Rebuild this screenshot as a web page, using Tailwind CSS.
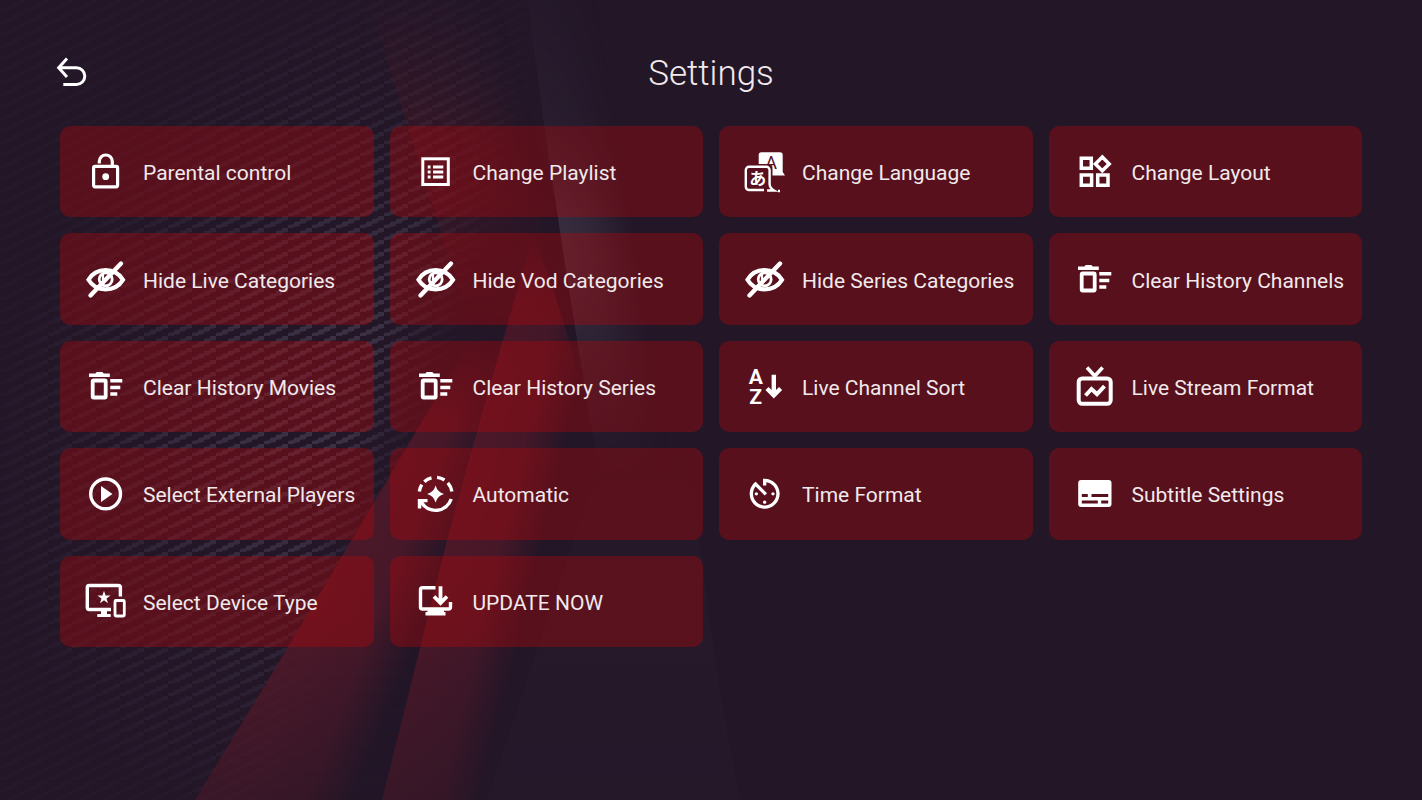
<!DOCTYPE html>
<html lang="en">

<head>
    <meta charset="UTF-8" />
    <meta name="viewport" content="width=device-width, initial-scale=1.0" />
    <title>Settings</title>
    <script src="https://cdn.jsdelivr.net/npm/@tailwindcss/browser@4"></script>
</head>

<body class="relative min-h-screen overflow-x-hidden bg-[#221627] font-[Roboto,sans-serif] text-[#f1e9eb]">
    <!-- Background -->
    <svg class="absolute inset-0 h-full w-full" viewBox="0 0 1422 800" preserveAspectRatio="none" aria-hidden="true">
        <defs>
            <pattern id="carbon" width="24" height="12" patternUnits="userSpaceOnUse">
                <g fill="#8d89a6">
                    <path d="M0 9l6-1v4H0z" />
                    <path d="M6 6l6-1v5l-6 1z" />
                    <path d="M12 3l6-1v5l-6 1z" />
                    <path d="M18 0h6v4l-6 1z" />
                </g>
            </pattern>
            <radialGradient id="glow" gradientUnits="userSpaceOnUse" cx="0" cy="0" r="1"
                gradientTransform="translate(330 400) rotate(-66) scale(430 320)">
                <stop offset="0" stop-color="#fff" stop-opacity=".26" />
                <stop offset=".4" stop-color="#fff" stop-opacity=".19" />
                <stop offset=".75" stop-color="#fff" stop-opacity=".08" />
                <stop offset="1" stop-color="#fff" stop-opacity=".03" />
            </radialGradient>
            <linearGradient id="edge" gradientUnits="userSpaceOnUse" x1="390" y1="300" x2="465" y2="325">
                <stop offset="0" stop-color="#fff" />
                <stop offset="1" stop-color="#000" />
            </linearGradient>
            <mask id="fadeGlow" maskUnits="userSpaceOnUse" x="0" y="0" width="1422" height="800">
                <rect width="600" height="800" fill="url(#glow)" />
            </mask>
            <mask id="fadeEdge" maskUnits="userSpaceOnUse" x="0" y="0" width="1422" height="800">
                <rect width="1422" height="800" fill="url(#edge)" />
            </mask>
            <linearGradient id="shardA" gradientUnits="userSpaceOnUse" x1="420" y1="140" x2="530" y2="110">
                <stop offset="0" stop-color="#5a1826" stop-opacity=".34" />
                <stop offset=".5" stop-color="#5a1826" stop-opacity=".26" />
                <stop offset="1" stop-color="#5a1826" stop-opacity="0" />
            </linearGradient>
            <linearGradient id="shardB" gradientUnits="userSpaceOnUse" x1="562" y1="240" x2="635" y2="228">
                <stop offset="0" stop-color="#5a5367" stop-opacity=".38" />
                <stop offset=".4" stop-color="#5a5367" stop-opacity=".28" />
                <stop offset="1" stop-color="#5a5367" stop-opacity="0" />
            </linearGradient>
            <linearGradient id="shardC" gradientUnits="userSpaceOnUse" x1="447" y1="540" x2="540" y2="562">
                <stop offset="0" stop-color="#6a1a2a" stop-opacity=".6" />
                <stop offset=".55" stop-color="#6a1a2a" stop-opacity=".5" />
                <stop offset="1" stop-color="#6a1a2a" stop-opacity="0" />
            </linearGradient>
            <linearGradient id="shardD" gradientUnits="userSpaceOnUse" x1="340" y1="553" x2="436" y2="590">
                <stop offset="0" stop-color="#6a1a2a" stop-opacity=".6" />
                <stop offset=".55" stop-color="#6a1a2a" stop-opacity=".5" />
                <stop offset="1" stop-color="#6a1a2a" stop-opacity="0" />
            </linearGradient>
            <linearGradient id="shardE" gradientUnits="userSpaceOnUse" x1="0" y1="420" x2="0" y2="800">
                <stop offset="0" stop-color="#2b1d2f" stop-opacity="0" />
                <stop offset=".4" stop-color="#2b1d2f" stop-opacity=".4" />
                <stop offset="1" stop-color="#2b1d2f" stop-opacity=".3" />
            </linearGradient>
            <linearGradient id="fadeTopA" x1="0" y1="0" x2="0" y2="1">
                <stop offset="0" stop-color="#222" />
                <stop offset=".4" stop-color="#fff" />
                <stop offset=".55" stop-color="#fff" />
                <stop offset="1" stop-color="#000" />
            </linearGradient>
            <linearGradient id="fadeTopB" x1="0" y1="0" x2="0" y2="1">
                <stop offset="0" stop-color="#222" />
                <stop offset=".25" stop-color="#555" />
                <stop offset=".45" stop-color="#fff" />
                <stop offset=".55" stop-color="#fff" />
                <stop offset="1" stop-color="#000" />
            </linearGradient>
            <mask id="fadeA" maskUnits="userSpaceOnUse" x="340" y="0" width="300" height="350">
                <rect x="340" width="300" height="350" fill="url(#fadeTopA)" />
            </mask>
            <mask id="fadeB" maskUnits="userSpaceOnUse" x="400" y="0" width="400" height="480">
                <rect x="400" width="400" height="480" fill="url(#fadeTopB)" />
            </mask>
            <linearGradient id="fadeInC" gradientUnits="userSpaceOnUse" x1="0" y1="230" x2="0" y2="800">
                <stop offset="0" stop-color="#000" />
                <stop offset=".12" stop-color="#ccc" />
                <stop offset=".25" stop-color="#fff" />
                <stop offset=".6" stop-color="#fff" />
                <stop offset="1" stop-color="#888" />
            </linearGradient>
            <linearGradient id="fadeInD" gradientUnits="userSpaceOnUse" x1="0" y1="340" x2="0" y2="800">
                <stop offset="0" stop-color="#000" />
                <stop offset=".18" stop-color="#fff" />
                <stop offset=".6" stop-color="#fff" />
                <stop offset="1" stop-color="#888" />
            </linearGradient>
            <mask id="fadeC" maskUnits="userSpaceOnUse" x="150" y="230" width="500" height="570">
                <rect x="150" y="230" width="500" height="570" fill="url(#fadeInC)" />
            </mask>
            <mask id="fadeD" maskUnits="userSpaceOnUse" x="150" y="230" width="500" height="570">
                <rect x="150" y="230" width="500" height="570" fill="url(#fadeInD)" />
            </mask>
        </defs>
        <g mask="url(#fadeEdge)">
            <rect width="600" height="800" fill="url(#carbon)" mask="url(#fadeGlow)" />
        </g>
        <path d="M368 0Q412 140 478 350H640V0z" fill="url(#shardA)" mask="url(#fadeA)" />
        <path d="M528 0Q545 150 600 480H800V0z" fill="url(#shardB)" mask="url(#fadeB)" />
        <path d="M614 420L487 800H740Q700 600 690 420z" fill="url(#shardE)" />
        <g mask="url(#fadeD)">
            <path d="M470 340Q395 467 288 647L195 800H382L447 540L505 340z" fill="#221627" />
            <path d="M470 340Q395 467 288 647L195 800H382L447 540L505 340z" fill="url(#shardD)" />
        </g>
        <path d="M533 235Q480 420 447 540L382 800H600V450Q560 300 533 235z" fill="url(#shardC)" mask="url(#fadeC)" />
    </svg>

    <!-- Shared icons -->
    <svg class="hidden" aria-hidden="true">
        <mask id="slashGap" maskUnits="userSpaceOnUse" x="0" y="0" width="48" height="48">
            <rect width="48" height="48" fill="#fff" />
            <path d="M43.500 10L12.500 43" stroke="#000" stroke-width="2.500" />
        </mask>
        <symbol id="eye-off" viewBox="0 0 48 48">
            <g fill="none" stroke="#fff" mask="url(#slashGap)">
                <path d="M7.500 24.800C15 12 34 12 42 24.800C34 37.500 15 37.500 7.500 24.800z" stroke-width="4.200" />
                <circle cx="24.700" cy="24.300" r="6.500" stroke-width="2.800" />
                <path d="M22 18v6h5" stroke-width="2.200" />
            </g>
            <path d="M40 8.500L9.500 40.500" stroke="#fff" stroke-width="4.400" stroke-linecap="round" />
        </symbol>
        <symbol id="trash" viewBox="0 0 48 48">
            <path fill="#fff" d="M8 11.600h6.300l1.500-1.600h5.500l1.500 1.600h6v3.400H8zM29.300 17h12v3.600h-12zM29.300 23.700h10v3.600h-10zM29.300 30.200h7v3.600h-7z" />
            <rect x="11.700" y="18.500" width="13" height="17" rx="1" fill="none" stroke="#fff" stroke-width="3.800" />
        </symbol>
    </svg>

    <div class="relative px-[60px] pb-8">
        <!-- Header -->
        <header class="-mx-3 grid grid-cols-[48px_1fr_48px] items-center pt-[49px]">
            <button type="button" aria-label="Back" class="size-12 cursor-pointer">
                <svg class="size-12" viewBox="0 0 48 48" fill="none" stroke="#fff" stroke-width="3">
                    <path d="M19 9.500L10.700 18.800L19 28M11 18.800H28.500a8.300 8.300 0 0 1 0 16.600H15.300" />
                </svg>
            </button>
            <h1 class="pt-[2px] text-center text-[35px] leading-[46px] font-light">Settings</h1>
        </header>

        <!-- Options -->
        <main class="mt-[29px] grid min-h-[521px] grid-cols-4 grid-rows-5 gap-4 text-[21px] leading-7 whitespace-nowrap">
            <button type="button" class="flex cursor-pointer items-center gap-[14px] rounded-[10px] bg-[#b9050a]/35 pl-[21px] hover:bg-[#b9050a]/50">
                <svg class="size-12 shrink-0" viewBox="0 0 48 48" fill="none" stroke="#fff" stroke-width="3.200">
                    <rect x="12.600" y="18.400" width="24" height="20.400" rx="1.500" />
                    <path d="M18.300 15.500v-2a6.500 6.500 0 0 1 13 0V18" />
                    <circle cx="24.700" cy="28.700" r="3.400" fill="#fff" stroke="none" />
                </svg>
                <span class="pt-[3px]">Parental control</span>
            </button>
            <button type="button" class="flex cursor-pointer items-center gap-[14px] rounded-[10px] bg-[#b9050a]/35 pl-[21px] hover:bg-[#b9050a]/50">
                <svg class="size-12 shrink-0" viewBox="0 0 48 48" fill="none" stroke="#fff" stroke-width="3">
                    <rect x="11.800" y="10.800" width="25.500" height="25.700" />
                    <path d="M22 18.900h10.300M22 23.900h10.300M22 28.900h10.300M16.700 18.900h2.900M16.700 23.900h2.900M16.700 28.900h2.900" />
                </svg>
                <span class="pt-[3px]">Change Playlist</span>
            </button>
            <button type="button" class="flex cursor-pointer items-center gap-[14px] rounded-[10px] bg-[#b9050a]/35 pl-[21px] hover:bg-[#b9050a]/50">
                <svg class="size-12 shrink-0" viewBox="0 0 48 48" aria-hidden="true">
                    <path fill="#fff" d="M21.500 4.300H40a2.700 2.700 0 0 1 2.700 2.700V24l2.300 3.400H32.500V20a4 4 0 0 0-4-4H18.700V7a2.700 2.700 0 0 1 2.800-2.700z" />
                    <text x="31" y="20.500" text-anchor="middle" font-family="Roboto" font-size="18" fill="#57101d">A</text>
                    <path fill="none" stroke="#fff" stroke-width="2.400" d="M24 42H9a3.200 3.200 0 0 1-3.200-3.200V22A3.200 3.200 0 0 1 9 18.800H26.400A3.200 3.200 0 0 1 29.600 22V36q0 4 4.500 6.500h-7M38 43h2" />
                    <text x="17.800" y="37" text-anchor="middle" font-family="Noto Sans CJK JP" font-weight="700" font-size="17" fill="#fff">あ</text>
                </svg>
                <span class="pt-[3px]">Change Language</span>
            </button>
            <button type="button" class="flex cursor-pointer items-center gap-[14px] rounded-[10px] bg-[#b9050a]/35 pl-[21px] hover:bg-[#b9050a]/50">
                <svg class="size-12 shrink-0" viewBox="0 0 48 48" fill="none" stroke="#fff" stroke-width="3.500">
                    <path d="M11.300 10.300h10v10h-10zM11.300 27h10.300v10.300h-10.300zM27.700 27h10.300v10.300H27.700zM32.300 9l6.900 6.900l-6.900 6.900l-6.900-6.900z" />
                </svg>
                <span class="pt-[3px]">Change Layout</span>
            </button>

            <button type="button" class="flex cursor-pointer items-center gap-[14px] rounded-[10px] bg-[#b9050a]/35 pl-[21px] hover:bg-[#b9050a]/50">
                <svg class="size-12 shrink-0"><use href="#eye-off" /></svg>
                <span class="pt-[3px]">Hide Live Categories</span>
            </button>
            <button type="button" class="flex cursor-pointer items-center gap-[14px] rounded-[10px] bg-[#b9050a]/35 pl-[21px] hover:bg-[#b9050a]/50">
                <svg class="size-12 shrink-0"><use href="#eye-off" /></svg>
                <span class="pt-[3px]">Hide Vod Categories</span>
            </button>
            <button type="button" class="flex cursor-pointer items-center gap-[14px] rounded-[10px] bg-[#b9050a]/35 pl-[21px] hover:bg-[#b9050a]/50">
                <svg class="size-12 shrink-0"><use href="#eye-off" /></svg>
                <span class="pt-[3px]">Hide Series Categories</span>
            </button>
            <button type="button" class="flex cursor-pointer items-center gap-[14px] rounded-[10px] bg-[#b9050a]/35 pl-[21px] hover:bg-[#b9050a]/50">
                <svg class="size-12 shrink-0"><use href="#trash" /></svg>
                <span class="pt-[3px]">Clear History Channels</span>
            </button>

            <button type="button" class="flex cursor-pointer items-center gap-[14px] rounded-[10px] bg-[#b9050a]/35 pl-[21px] hover:bg-[#b9050a]/50">
                <svg class="size-12 shrink-0"><use href="#trash" /></svg>
                <span class="pt-[3px]">Clear History Movies</span>
            </button>
            <button type="button" class="flex cursor-pointer items-center gap-[14px] rounded-[10px] bg-[#b9050a]/35 pl-[21px] hover:bg-[#b9050a]/50">
                <svg class="size-12 shrink-0"><use href="#trash" /></svg>
                <span class="pt-[3px]">Clear History Series</span>
            </button>
            <button type="button" class="flex cursor-pointer items-center gap-[14px] rounded-[10px] bg-[#b9050a]/35 pl-[21px] hover:bg-[#b9050a]/50">
                <svg class="size-12 shrink-0" viewBox="0 0 48 48" aria-hidden="true">
                    <text font-family="Roboto" font-weight="700" font-size="21" fill="#fff" text-anchor="middle">
                        <tspan x="15.700" y="22">A</tspan><tspan x="15.700" y="41.500">Z</tspan>
                    </text>
                    <path fill="none" stroke="#fff" stroke-width="4.400" d="M33.800 12.800V34M27 26.500l6.800 6.800l6.800-6.800" />
                </svg>
                <span class="pt-[3px]">Live Channel Sort</span>
            </button>
            <button type="button" class="flex cursor-pointer items-center gap-[14px] rounded-[10px] bg-[#b9050a]/35 pl-[21px] hover:bg-[#b9050a]/50">
                <svg class="size-12 shrink-0" viewBox="0 0 48 48" fill="none" stroke="#fff" stroke-width="4">
                    <rect x="8.700" y="16.500" width="32" height="25.300" rx="3.500" />
                    <path d="M17 5.500l7.800 8.500l7.800-8.500" stroke-width="3.600" />
                    <path d="M15.500 33.500l6-6.500l5.500 5.200l7.500-8" />
                </svg>
                <span class="pt-[3px]">Live Stream Format</span>
            </button>

            <button type="button" class="flex cursor-pointer items-center gap-[14px] rounded-[10px] bg-[#b9050a]/35 pl-[21px] hover:bg-[#b9050a]/50">
                <svg class="size-12 shrink-0" viewBox="0 0 48 48">
                    <circle cx="24.600" cy="23.900" r="14.900" fill="none" stroke="#fff" stroke-width="3.400" />
                    <path fill="#fff" d="M20 15.900l11.500 8l-11.500 8z" />
                </svg>
                <span class="pt-[3px]">Select External Players</span>
            </button>
            <button type="button" class="flex cursor-pointer items-center gap-[14px] rounded-[10px] bg-[#b9050a]/35 pl-[21px] hover:bg-[#b9050a]/50">
                <svg class="size-12 shrink-0" viewBox="0 0 48 48" fill="none" stroke="#fff" stroke-width="3.400">
                    <path d="M8.300 21.500A16.500 16.500 0 0 1 10.800 14.700M13.300 11.700A16.500 16.500 0 0 1 20.500 7.900M26 7.400A16.500 16.500 0 0 1 33.500 10M36.800 12.800A16.500 16.500 0 0 1 40.900 21.500M40.200 29A16.500 16.500 0 0 1 10.500 32.500" />
                    <path fill="#fff" stroke="none" d="M6.800 29h9.700v3.200h-4l-2.200 1.800v4.500H6.800zM24.600 15.500q1.800 6.600 8.400 8.500q-6.600 1.800-8.400 8.500q-1.800-6.600-8.500-8.500q6.600-1.800 8.500-8.500z" />
                </svg>
                <span class="pt-[3px]">Automatic</span>
            </button>
            <button type="button" class="flex cursor-pointer items-center gap-[14px] rounded-[10px] bg-[#b9050a]/35 pl-[21px] hover:bg-[#b9050a]/50">
                <svg class="size-12 shrink-0" viewBox="-2.800 -2.300 28.800 28.800" fill="#fff">
                    <path d="M11 17c0 .55.45 1 1 1s1-.45 1-1-.45-1-1-1-1 .45-1 1zm0-14v4h2V5.080c3.390.49 6 3.390 6 6.920 0 3.870-3.130 7-7 7s-7-3.130-7-7c0-1.680.59-3.220 1.580-4.420L12 13l1.410-1.410-6.800-6.800v.02C4.420 6.450 3 9.050 3 12c0 4.970 4.020 9 9 9 4.970 0 9-4.030 9-9s-4.030-9-9-9h-1zm7 9c0-.55-.45-1-1-1s-1 .45-1 1 .45 1 1 1 1-.45 1-1zM6 12c0 .55.45 1 1 1s1-.45 1-1-.45-1-1-1-1 .45-1 1z" />
                </svg>
                <span class="pt-[3px]">Time Format</span>
            </button>
            <button type="button" class="flex cursor-pointer items-center gap-[14px] rounded-[10px] bg-[#b9050a]/35 pl-[21px] hover:bg-[#b9050a]/50">
                <svg class="size-12 shrink-0" viewBox="0 0 48 48" fill="#fff" fill-rule="evenodd">
                    <path d="M11.200 10H38.500a3 3 0 0 1 3 3V34a3 3 0 0 1-3 3H11.200a3 3 0 0 1-3-3V13a3 3 0 0 1 3-3zM11.800 24v3h6v-3zM21.500 24v3h16.700v-3zM11.800 30.600v3h16v-3zM31.200 30.600v3h7v-3z" />
                </svg>
                <span class="pt-[3px]">Subtitle Settings</span>
            </button>

            <button type="button" class="flex cursor-pointer items-center gap-[14px] rounded-[10px] bg-[#b9050a]/35 pl-[21px] hover:bg-[#b9050a]/50">
                <svg class="size-12 shrink-0" viewBox="0 0 48 48" fill="none" stroke="#fff" stroke-width="3.400">
                    <path d="M39.400 19.500V10.500a2 2 0 0 0-2-2H8.300a2 2 0 0 0-2 2V30.500a2 2 0 0 0 2 2H30" />
                    <rect x="34" y="23.500" width="9.300" height="15.500" rx="1" stroke-width="2.800" />
                    <path fill="#fff" stroke="none" d="M20 33.500h6v3.500h3.700v3H16.300v-3H20zM23 13.800l1.600 4.700h4.900l-4 2.900l1.500 4.800l-4-2.900l-4 2.900l1.500-4.800l-4-2.900h4.900z" />
                </svg>
                <span class="pt-[3px]">Select Device Type</span>
            </button>
            <button type="button" class="flex cursor-pointer items-center gap-[14px] rounded-[10px] bg-[#b9050a]/35 pl-[21px] hover:bg-[#b9050a]/50">
                <svg class="size-12 shrink-0" viewBox="0 0 48 48" fill="none" stroke="#fff" stroke-width="3.400">
                    <path d="M24.500 10.700H11.500a2 2 0 0 0-2 2V30a2 2 0 0 0 2 2H37.500a2 2 0 0 0 2-2V25" />
                    <path d="M29.500 9.200V25M23 19.500l6.500 6.500l6.500-6.500" stroke-width="3.800" />
                    <path fill="#fff" stroke="none" d="M16.500 32h16.500v3h1.500v3.600H14.500V35h2z" />
                </svg>
                <span class="pt-[3px]">UPDATE NOW</span>
            </button>
        </main>
    </div>
</body>

</html>
